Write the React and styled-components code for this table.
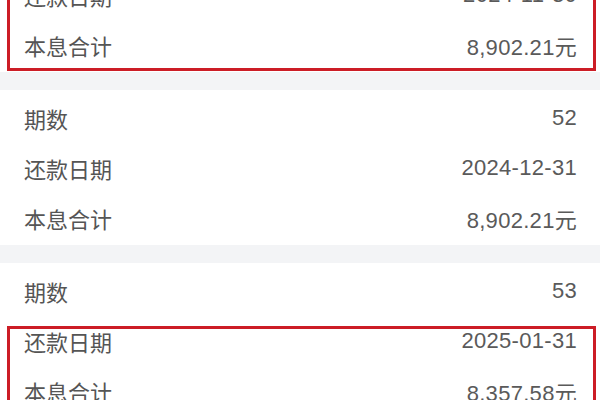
import React from "react";
import styled, { createGlobalStyle } from "styled-components";

const GlobalStyle = createGlobalStyle`
  html, body {
    margin: 0;
    padding: 0;
    background: #f3f4f6;
    overflow: hidden;
  }
  body {
    font-family: "Liberation Sans", "Noto Sans CJK SC", sans-serif;
  }
`;

const periods = [
  { no: 51, date: "2024-11-30", total: "8,902.21元", mark: true },
  { no: 52, date: "2024-12-31", total: "8,902.21元", mark: false },
  { no: 53, date: "2025-01-31", total: "8,357.58元", mark: true },
];

const App = () => {
  return (
    <>
      <GlobalStyle />
      <Page>
        {periods.map((p) => (
          <Card key={p.no}>
            <Row>
              <Label>期数</Label>
              <Value>{p.no}</Value>
            </Row>
            <Highlight $on={p.mark}>
              <Row>
                <Label>还款日期</Label>
                <Value>{p.date}</Value>
              </Row>
              <Row>
                <Label>本息合计</Label>
                <Value>{p.total}</Value>
              </Row>
            </Highlight>
          </Card>
        ))}
      </Page>
    </>
  );
};

export default App;

const Page = styled.div`
  display: flex;
  flex-direction: column;
  gap: 18px;
  margin-top: -83px;
  height: 483px;
  overflow: hidden;
`;

const Card = styled.div`
  background: #ffffff;
  padding: 3px 0 2px;
  flex-shrink: 0;
`;

const Highlight = styled.div`
  position: relative;
  &::after {
    content: "";
    display: ${(p) => (p.$on ? "block" : "none")};
    position: absolute;
    left: 7px;
    right: 4px;
    top: 10px;
    bottom: -1px;
    border: 3px solid #cc1d26;
    pointer-events: none;
  }
`;

const Row = styled.div`
  display: flex;
  align-items: center;
  justify-content: space-between;
  height: 50px;
  padding: 0 23px 0 24px;
  font-size: 22px;
`;

const Label = styled.span`
  color: #555555;
`;

const Value = styled.span`
  color: #5a5a5a;
  letter-spacing: 0.3px;
`;
